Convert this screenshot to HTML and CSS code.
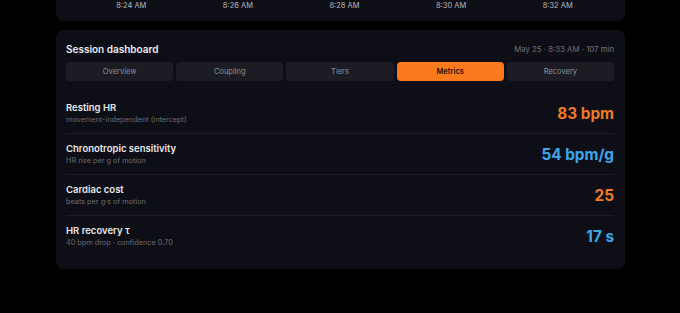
FILE: index.html
```html
<!DOCTYPE html>
<html lang="en">
<head>
    <meta charset="UTF-8">
    <meta name="viewport" content="width=device-width, initial-scale=1.0">
    <title>Session dashboard</title>
    <link rel="stylesheet" href="styles.css">
</head>
<body>
    <!-- bottom of the timeline chart card -->
    <section class="card chart-card">
        <div class="time-axis">
            <span>8:24 AM</span>
            <span>8:26 AM</span>
            <span>8:28 AM</span>
            <span>8:30 AM</span>
            <span>8:32 AM</span>
        </div>
    </section>

    <section class="card dashboard">
        <div class="dash-header">
            <h2>Session dashboard</h2>
            <span class="meta">May 25 · 8:33 AM · 107 min</span>
        </div>

        <nav class="tabs">
            <button class="tab">Overview</button>
            <button class="tab">Coupling</button>
            <button class="tab">Tiers</button>
            <button class="tab active">Metrics</button>
            <button class="tab">Recovery</button>
        </nav>

        <ul class="metrics">
            <li class="metric">
                <div class="label">
                    <div class="name">Resting HR</div>
                    <div class="desc">movement-independent (intercept)</div>
                </div>
                <div class="value orange">83 bpm</div>
            </li>
            <li class="metric">
                <div class="label">
                    <div class="name">Chronotropic sensitivity</div>
                    <div class="desc">HR rise per g of motion</div>
                </div>
                <div class="value blue">54 bpm/g</div>
            </li>
            <li class="metric">
                <div class="label">
                    <div class="name">Cardiac cost</div>
                    <div class="desc">beats per g·s of motion</div>
                </div>
                <div class="value orange">25</div>
            </li>
            <li class="metric">
                <div class="label">
                    <div class="name">HR recovery τ</div>
                    <div class="desc">40 bpm drop · confidence 0.70</div>
                </div>
                <div class="value blue">17 s</div>
            </li>
        </ul>
    </section>
</body>
</html>
```

FILE: styles.css
```css
body {
    margin: 0;
    background-color: #000;
    font-family: 'Inter', 'Noto Sans', sans-serif;
    color: #e6e6ea;
}

.card {
    width: 569px;
    margin-left: 56px;
    background-color: #0e0f16;
    border-radius: 8px;
    box-sizing: border-box;
}

/* Chart card (only its bottom is visible) */
.chart-card {
    height: 21px;
    border-top-left-radius: 0;
    border-top-right-radius: 0;
    padding: 0 14px 0 22px;
}

.time-axis {
    display: grid;
    grid-template-columns: repeat(5, 1fr);
    padding-top: 1px;
}

.time-axis span {
    text-align: center;
    font-size: 7.5px;
    color: #b8b9c0;
    line-height: 10px;
}

/* Dashboard card */
.dashboard {
    margin-top: 9px;
    padding: 10px 11px 12px 10px;
}

.dash-header {
    display: flex;
    justify-content: space-between;
    align-items: center;
    height: 14px;
    margin-top: 2px;
}

.dash-header h2 {
    margin: 0;
    font-size: 10px;
    font-weight: 600;
    color: #ececf0;
}

.meta {
    font-size: 7.8px;
    color: #6e6f78;
}

.tabs {
    display: grid;
    grid-template-columns: repeat(5, 1fr);
    gap: 3px;
    margin-top: 6px;
}

.tab {
    height: 19px;
    border: none;
    border-radius: 4px;
    background-color: #1b1c24;
    color: #8e8f98;
    font-family: inherit;
    font-size: 7.5px;
    padding: 0;
}

.tab.active {
    background-color: #fb7a1e;
    color: #2a1204;
    font-weight: 600;
}

.metrics {
    list-style: none;
    margin: 12px 0 0 0;
    padding: 0;
}

.metric {
    display: flex;
    justify-content: space-between;
    align-items: center;
    height: 41px;
    box-sizing: border-box;
    border-bottom: 1px solid #1c1d25;
}

.metric:last-child {
    border-bottom: none;
}

.name {
    font-size: 9.5px;
    font-weight: 600;
    color: #e8e8ec;
    line-height: 12px;
}

.desc {
    font-size: 7.3px;
    color: #6a6b74;
    line-height: 10px;
    margin-top: 1px;
}

.value {
    font-size: 15.3px;
    font-weight: 700;
}

.orange {
    color: #f27a27;
}

.blue {
    color: #3da7ec;
}
```
